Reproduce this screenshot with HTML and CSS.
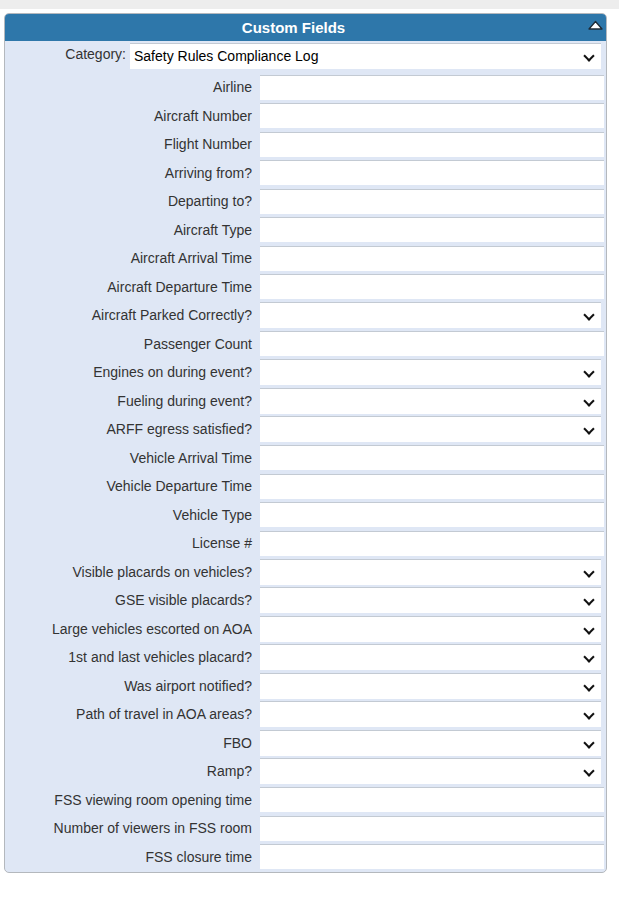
FILE: index.html
```html
<!DOCTYPE html>
<html lang="en">
<head>
  <meta charset="UTF-8">
  <title>Custom Fields</title>
  <link rel="stylesheet" href="styles.css">
</head>
<body>
  <div class="topbar"></div>
  <div class="panel">
    <div class="panel-header">
      <span class="panel-title">Custom Fields</span>
      <svg class="collapse" width="15" height="10" viewBox="0 0 15 10">
        <path d="M1 9 L7.5 1.5 L14 9 Z" fill="#fff" stroke="#1d2a36" stroke-width="1.3" stroke-linejoin="round"/>
      </svg>
    </div>
    <div class="panel-body">
      <div class="category-row">
        <label class="category-label">Category:</label>
        <div class="select category-select">Safety Rules Compliance Log<span class="chev"></span></div>
      </div>

      <div class="row"><label>Airline</label><div class="input"></div></div>
      <div class="row"><label>Aircraft Number</label><div class="input"></div></div>
      <div class="row"><label>Flight Number</label><div class="input"></div></div>
      <div class="row"><label>Arriving from?</label><div class="input"></div></div>
      <div class="row"><label>Departing to?</label><div class="input"></div></div>
      <div class="row"><label>Aircraft Type</label><div class="input"></div></div>
      <div class="row"><label>Aircraft Arrival Time</label><div class="input"></div></div>
      <div class="row"><label>Aircraft Departure Time</label><div class="input"></div></div>
      <div class="row"><label>Aircraft Parked Correctly?</label><div class="select"><span class="chev"></span></div></div>
      <div class="row"><label>Passenger Count</label><div class="input"></div></div>
      <div class="row"><label>Engines on during event?</label><div class="select"><span class="chev"></span></div></div>
      <div class="row"><label>Fueling during event?</label><div class="select"><span class="chev"></span></div></div>
      <div class="row"><label>ARFF egress satisfied?</label><div class="select"><span class="chev"></span></div></div>
      <div class="row"><label>Vehicle Arrival Time</label><div class="input"></div></div>
      <div class="row"><label>Vehicle Departure Time</label><div class="input"></div></div>
      <div class="row"><label>Vehicle Type</label><div class="input"></div></div>
      <div class="row"><label>License #</label><div class="input"></div></div>
      <div class="row"><label>Visible placards on vehicles?</label><div class="select"><span class="chev"></span></div></div>
      <div class="row"><label>GSE visible placards?</label><div class="select"><span class="chev"></span></div></div>
      <div class="row"><label>Large vehicles escorted on AOA</label><div class="select"><span class="chev"></span></div></div>
      <div class="row"><label>1st and last vehicles placard?</label><div class="select"><span class="chev"></span></div></div>
      <div class="row"><label>Was airport notified?</label><div class="select"><span class="chev"></span></div></div>
      <div class="row"><label>Path of travel in AOA areas?</label><div class="select"><span class="chev"></span></div></div>
      <div class="row"><label>FBO</label><div class="select"><span class="chev"></span></div></div>
      <div class="row"><label>Ramp?</label><div class="select"><span class="chev"></span></div></div>
      <div class="row"><label>FSS viewing room opening time</label><div class="input"></div></div>
      <div class="row"><label>Number of viewers in FSS room</label><div class="input"></div></div>
      <div class="row"><label>FSS closure time</label><div class="input"></div></div>
    </div>
  </div>
</body>
</html>
```

FILE: styles.css
```css
body {
  margin: 0;
  padding: 0;
  background: #ffffff;
  font-family: "Liberation Sans", Arial, sans-serif;
  font-size: 14px;
  color: #333;
}

.topbar {
  height: 9px;
  background: #ededed;
}

.panel {
  margin: 4px 12px 0 4px;
  border: 1px solid #b4b8bd;
  border-radius: 5px;
  background: #dfe7f5;
  overflow: hidden;
}

.panel-header {
  position: relative;
  height: 27px;
  background: #2e77aa;
  display: flex;
  align-items: center;
  justify-content: center;
  padding-right: 24px;
}

.panel-title {
  color: #fff;
  font-weight: bold;
  font-size: 15px;
}

.collapse {
  position: absolute;
  right: 3px;
  top: 6px;
}

.panel-body {
  padding: 0 2px 1px 0;
}

.category-row {
  display: flex;
  align-items: center;
  height: 27px;
  margin: 1px 0 4px;
}

.category-label {
  width: 121px;
  text-align: right;
  padding-right: 4px;
  margin-top: -4px;
}

.category-select {
  flex: 1;
  margin-right: 3px;
  padding-left: 4px;
  color: #000;
}

.row {
  display: flex;
  align-items: center;
  height: 28.5px;
}

.row label {
  width: 255px;
  flex: none;
  text-align: right;
  padding-right: 8px;
  box-sizing: border-box;
}

.input {
  flex: 1;
  height: 25px;
  box-sizing: border-box;
  background: #fff;
  border-top: 1px solid #c3cad3;
}

.select {
  position: relative;
  height: 26px;
  box-sizing: border-box;
  background: #fff;
  border-top: 1px solid #c3cad3;
  display: flex;
  align-items: center;
}

.row .select {
  flex: 1;
  margin-right: 3px;
}

.chev {
  position: absolute;
  right: 8px;
  top: 8px;
  width: 6px;
  height: 6px;
  border-right: 2px solid #111;
  border-bottom: 2px solid #111;
  transform: rotate(45deg);
}
```
